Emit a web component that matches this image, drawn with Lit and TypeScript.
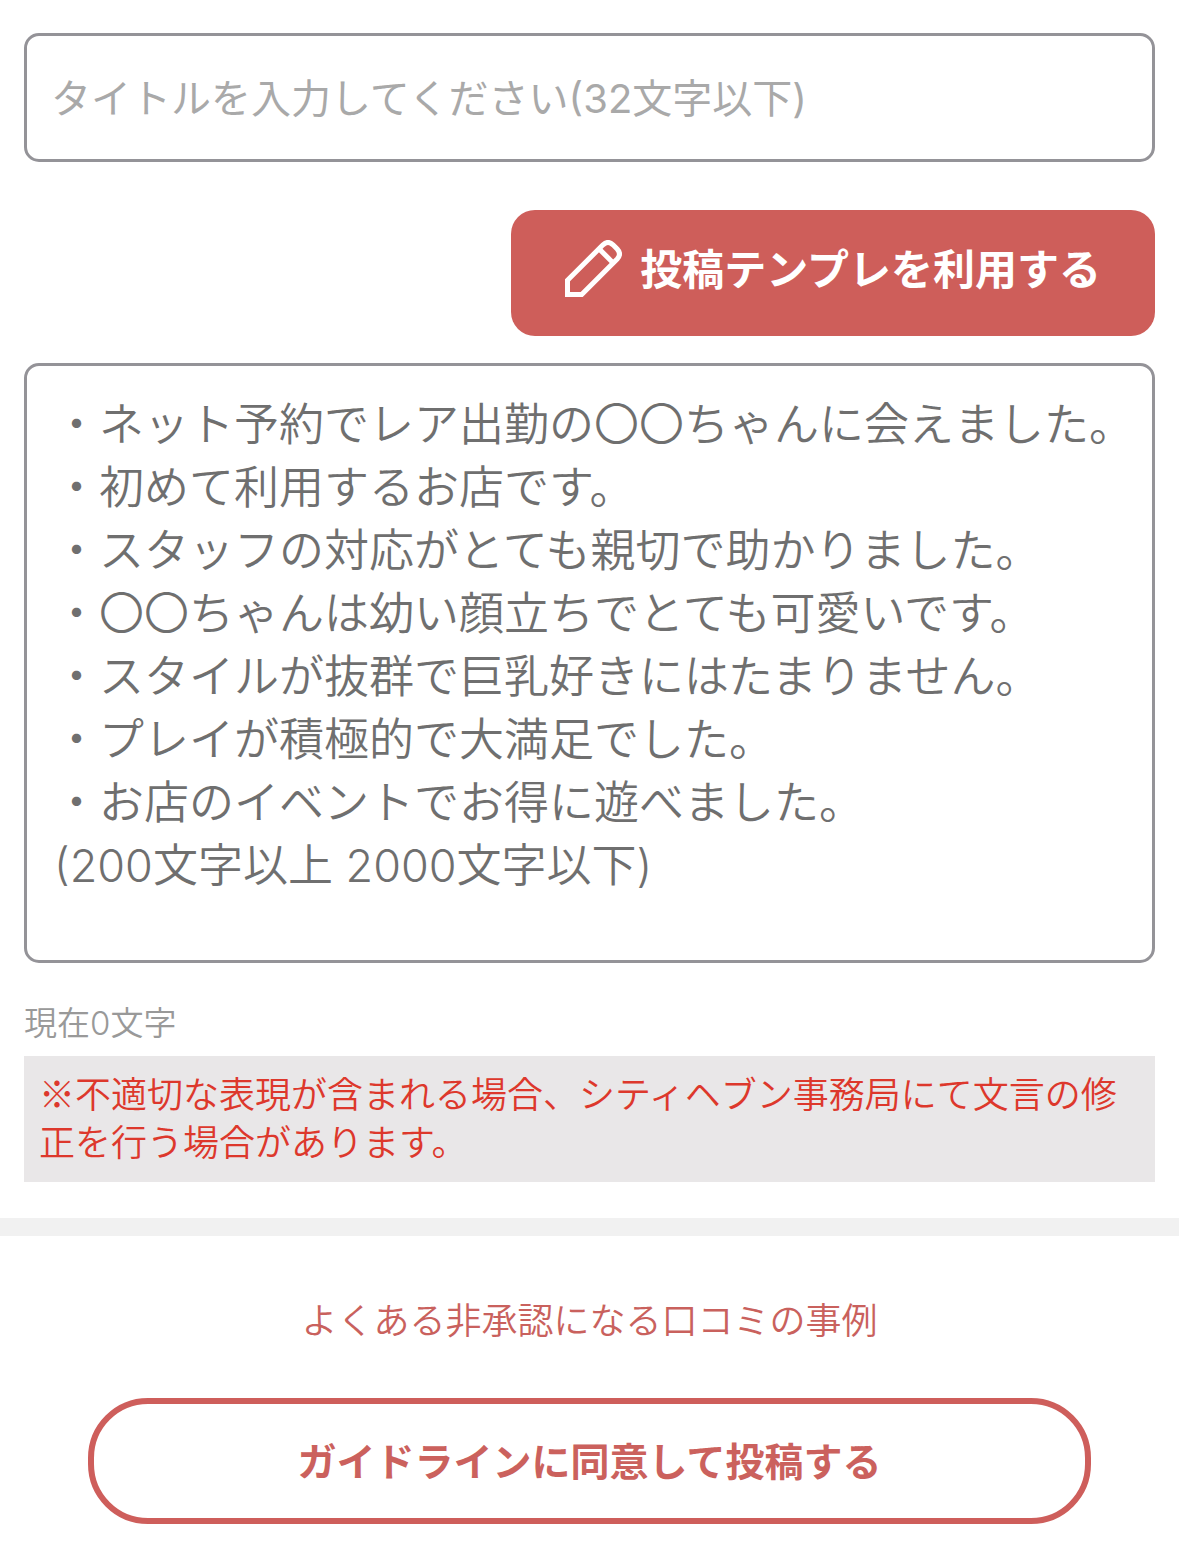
import { LitElement, html, css } from "lit";
import { customElement, state } from "lit/decorators.js";

const BODY_HINT = [
  "・ネット予約でレア出勤の〇〇ちゃんに会えました。",
  "・初めて利用するお店です。",
  "・スタッフの対応がとても親切で助かりました。",
  "・〇〇ちゃんは幼い顔立ちでとても可愛いです。",
  "・スタイルが抜群で巨乳好きにはたまりません。",
  "・プレイが積極的で大満足でした。",
  "・お店のイベントでお得に遊べました。",
  "(200文字以上 2000文字以下)",
].join("\n");

@customElement("app-root")
export class AppRoot extends LitElement {
  @state() private count = 0;

  static styles = css`
    :host {
      display: block;
      min-height: 100vh;
      background: #fff;
      font-family: "Noto Sans CJK JP", sans-serif;
      font-weight: 350;
    }
    * {
      box-sizing: border-box;
    }
    .form {
      display: flex;
      flex-direction: column;
      padding: 33px 24px 36px;
    }
    .field {
      display: block;
      width: 100%;
      margin: 0;
      border: 3px solid #949398;
      border-radius: 15px;
      background: #fff;
      color: #333;
      font-family: Inter, "Noto Sans CJK JP", sans-serif;
      font-weight: 350;
      outline-color: #d05e5b;
    }
    .title {
      padding: 34px 24px 32px;
      font-size: 40px;
      font-weight: 400;
      line-height: 57px;
    }
    .title::placeholder {
      color: #a9a9a9;
      opacity: 1;
    }
    .body {
      height: 600px;
      padding: 27px 12px 27px 27px;
      font-size: 45px;
      line-height: 63px;
      resize: none;
    }
    .body::placeholder {
      color: #6f6f6f;
      opacity: 1;
    }
    .template {
      display: flex;
      align-items: flex-start;
      align-self: flex-end;
      gap: 18px;
      margin: 48px 0 27px;
      padding: 30px 54px 39px;
      border: 0;
      border-radius: 24px;
      background: #ce5e5a;
      color: #fff;
      font-family: inherit;
      font-size: 42px;
      font-weight: 600;
      line-height: 54px;
      cursor: pointer;
    }
    .pencil {
      display: block;
      flex: none;
      width: 57px;
      height: 57px;
    }
    .count {
      margin: 36px 0 9px;
      color: #999;
      font-family: Inter, "Noto Sans CJK JP", sans-serif;
      font-size: 33px;
      line-height: 48px;
    }
    .notice {
      margin: 0;
      padding: 12px 15px 18px;
      background: #e9e7e8;
      color: #dd382c;
      font-size: 36px;
      line-height: 48px;
    }
    .footer {
      display: flex;
      flex-direction: column;
      align-items: center;
      gap: 54px;
      padding: 57px 0 33px;
      border-top: 18px solid #f1f1f1;
    }
    .examples {
      color: #c9615d;
      font-size: 36px;
      line-height: 51px;
      text-decoration: none;
    }
    .submit {
      width: 85%;
      padding: 28px 24px 32px;
      border: 6px solid #ce5e5b;
      border-radius: 60px;
      background: #fff;
      color: #cb615d;
      font-family: inherit;
      font-size: 39px;
      font-weight: 600;
      line-height: 54px;
      cursor: pointer;
    }
  `;

  private onInput(e: Event) {
    this.count = (e.target as HTMLTextAreaElement).value.length;
  }

  render() {
    return html`
      <form lang="ja" @submit=${(e: Event) => e.preventDefault()}>
        <div class="form">
          <input
            class="field title"
            type="text"
            maxlength="32"
            aria-label="タイトル"
            placeholder="タイトルを入力してください(32文字以下)"
          />
          <button class="template" type="button">
            <svg
              class="pencil"
              viewBox="0 0 57 57"
              fill="none"
              stroke="currentColor"
              stroke-width="5"
              aria-hidden="true"
            >
              <path
                d="M2.5 54.5V40.3L38 4.8Q43 .2 48 4.8L52.2 9Q56.8 14 52.2 19L16.7 54.5Z"
              />
              <path d="M34 8.8L48.2 23" />
            </svg>
            <span>投稿テンプレを利用する</span>
          </button>
          <textarea
            class="field body"
            maxlength="2000"
            aria-label="本文"
            placeholder=${BODY_HINT}
            @input=${this.onInput}
          ></textarea>
          <p class="count">現在${this.count}文字</p>
          <p class="notice">
            ※不適切な表現が含まれる場合、シティヘブン事務局にて文言の修正を行う場合があります。
          </p>
        </div>
        <div class="footer">
          <a class="examples" href="#examples">よくある非承認になる口コミの事例</a>
          <button class="submit" type="submit">ガイドラインに同意して投稿する</button>
        </div>
      </form>
    `;
  }
}
